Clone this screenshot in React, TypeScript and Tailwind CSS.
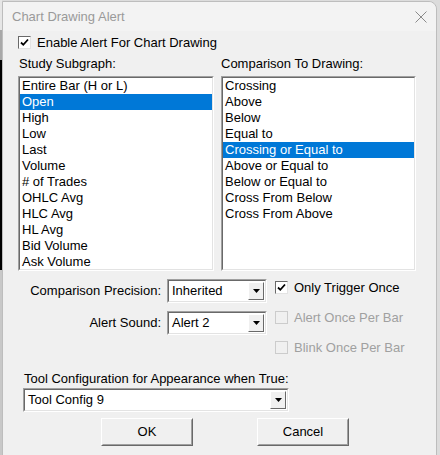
import React from "react";

const subgraphs = [
  "Entire Bar (H or L)",
  "Open",
  "High",
  "Low",
  "Last",
  "Volume",
  "# of Trades",
  "OHLC Avg",
  "HLC Avg",
  "HL Avg",
  "Bid Volume",
  "Ask Volume",
];

const comparisons = [
  "Crossing",
  "Above",
  "Below",
  "Equal to",
  "Crossing or Equal to",
  "Above or Equal to",
  "Below or Equal to",
  "Cross From Below",
  "Cross From Above",
];

// classic sunken 3D frame
function Sunken({ className = "", children }: { className?: string; children?: React.ReactNode }) {
  return (
    <div className={`border border-t-[#a0a0a0] border-l-[#a0a0a0] border-b-white border-r-white ${className}`}>
      <div className="h-full w-full border border-t-[#696969] border-l-[#696969] border-b-[#e3e3e3] border-r-[#e3e3e3] bg-white">
        {children}
      </div>
    </div>
  );
}

function ListBox({ items, selected, className = "" }: { items: string[]; selected: number; className?: string }) {
  return (
    <Sunken className={`h-[195px] ${className}`}>
      <div className="flex flex-col">
        {items.map((t, i) => (
          <div
            key={t}
            className={`h-4 leading-4 pl-[2px] whitespace-nowrap ${
              i === selected ? "bg-[#0078d7] text-white" : "text-black"
            }`}
          >
            {t}
          </div>
        ))}
      </div>
    </Sunken>
  );
}

function Arrow() {
  return (
    <div className="w-4 h-full border border-t-white border-l-white border-b-[#696969] border-r-[#696969] bg-[#f0f0f0] flex items-center justify-center">
      <svg width="7" height="4" viewBox="0 0 7 4">
        <path d="M0 0h7L3.5 4z" fill="#000" />
      </svg>
    </div>
  );
}

function Select({ value, className = "" }: { value: string; className?: string }) {
  return (
    <Sunken className={className}>
      <div className="flex h-full items-stretch p-px">
        <div className="flex-1 pl-[2px] flex items-center text-black">{value}</div>
        <Arrow />
      </div>
    </Sunken>
  );
}

function Check({ label, checked, disabled }: { label: string; checked?: boolean; disabled?: boolean }) {
  return (
    <div className="flex items-center gap-[6px] h-[13px]">
      <div
        className={`w-[13px] h-[13px] border flex items-center justify-center ${
          disabled
            ? "border-[#cccccc] bg-[#f0f0f0]"
            : "border-t-[#696969] border-l-[#696969] border-b-[#e3e3e3] border-r-[#e3e3e3] bg-white"
        }`}
      >
        {checked && (
          <svg width="9" height="9" viewBox="0 0 9 9">
            <path d="M1 4.5l2.3 2.3L8 1.5" stroke="#000" strokeWidth="1.8" fill="none" />
          </svg>
        )}
      </div>
      <span className={disabled ? "text-[#a0a0a0]" : "text-black"}>{label}</span>
    </div>
  );
}

function Button({ label }: { label: string }) {
  return (
    <div className="w-[92px] h-[28px] border border-t-white border-l-white border-b-[#696969] border-r-[#696969]">
      <div className="h-full w-full border border-t-[#f0f0f0] border-l-[#f0f0f0] border-b-[#a0a0a0] border-r-[#a0a0a0] bg-[#f0f0f0] flex items-center justify-center text-black">
        {label}
      </div>
    </div>
  );
}

export default function App() {
  return (
    <div className="w-[440px] h-[455px] flex bg-[#dcdcdc] font-['Liberation_Sans',Arial,sans-serif] text-[13px] overflow-hidden">
      <div className="w-[2px] flex flex-col">
        <div className="h-[30px] bg-[#e6e6e6]" />
        <div className="h-[30px] bg-[#a8a8a8]" />
        <div className="h-[210px] bg-black" />
        <div className="flex-1 bg-[#c8c8c8]" />
      </div>
      <div className="mt-px w-[435px] h-[460px] border border-[#bdbdbd] rounded-tr-[8px] bg-[#f0f0f0] flex flex-col">
        <div className="h-[29px] flex items-center justify-between pl-[9px] pr-[9px] bg-[#f3f3f3] rounded-tr-[8px]">
          <span className="text-[#9a9a9a] text-[13px]">Chart Drawing Alert</span>
          <svg width="12" height="12" viewBox="0 0 12 12">
            <path d="M0.5 0.5l11 11M11.5 0.5l-11 11" stroke="#8a8a8a" strokeWidth="1" />
          </svg>
        </div>
        <div className="flex flex-col pl-[15px]">
          <div className="mt-[5px]">
            <Check label="Enable Alert For Chart Drawing" checked />
          </div>
          <div className="flex gap-[7px] mt-[8px]">
            <div className="w-[196px] flex flex-col">
              <div className="leading-[13px] mb-[6px] pl-px">Study Subgraph:</div>
              <ListBox items={subgraphs} selected={1} />
            </div>
            <div className="w-[195px] flex flex-col">
              <div className="leading-[13px] mb-[6px]">Comparison To Drawing:</div>
              <ListBox items={comparisons} selected={4} />
            </div>
          </div>
          <div className="flex mt-[8px]">
            <div className="flex flex-col gap-[8px] w-[257px]">
              <div className="flex items-center gap-[6px]">
                <div className="w-[143px] text-right">Comparison Precision:</div>
                <Select value="Inherited" className="w-[100px] h-[24px]" />
              </div>
              <div className="flex items-center gap-[6px]">
                <div className="w-[143px] text-right">Alert Sound:</div>
                <Select value="Alert 2" className="w-[100px] h-[24px]" />
              </div>
            </div>
            <div className="flex flex-col gap-[17px] mt-[2px]">
              <Check label="Only Trigger Once" checked />
              <Check label="Alert Once Per Bar" disabled />
              <Check label="Blink Once Per Bar" disabled />
            </div>
          </div>
          <div className="mt-[17px] pl-[6px] leading-4">Tool Configuration for Appearance when True:</div>
          <Select value="Tool Config 9" className="w-[266px] h-[24px] mt-[1px] ml-[5px]" />
          <div className="flex gap-[64px] ml-[83px] mt-[6px]">
            <Button label="OK" />
            <Button label="Cancel" />
          </div>
        </div>
      </div>
      <div className="flex-1 bg-[#dcdcdc]" />
    </div>
  );
}
